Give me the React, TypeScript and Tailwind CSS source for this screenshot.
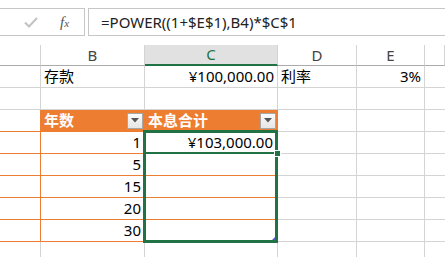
const grid = 'border-[#d4d4d4]';
const orange = 'border-[#ed7d31]';

const cols = [
  { key: 'A', w: 'w-[41px]' },
  { key: 'B', w: 'w-[104px]' },
  { key: 'C', w: 'w-[133px]' },
  { key: 'D', w: 'w-[79px]' },
  { key: 'E', w: 'w-[68px]' },
  { key: 'F', w: 'flex-1' },
];

const Dropdown = () => (
  <div className="w-[16px] h-[16px] border border-[#a6a6a6] bg-gradient-to-b from-[#fafafa] to-[#e6e6e6] flex items-center justify-center">
    <svg width="8" height="5" viewBox="0 0 8 5">
      <path d="M0 0 H8 L4 4.5 Z" fill="#555" />
    </svg>
  </div>
);

const years = ['1', '5', '15', '20', '30'];

const App = () => {
  return (
    <div className="relative w-[445px] h-[257px] overflow-hidden bg-white text-[15px] text-black font-['Noto_Sans','Noto_Sans_CJK_SC',sans-serif]">
      {/* formula bar */}
      <div className="h-[45px] flex items-start pt-[8px]">
        <div className="w-[85px] h-[28px] border border-l-0 border-[#c6c6c6] flex items-center">
          <svg className="ml-[24px]" width="14" height="11" viewBox="0 0 14 11">
            <path d="M1 5.5 L5 9.5 L13 1" fill="none" stroke="#c2c2c2" strokeWidth="2" />
          </svg>
          <span className="ml-[22px] text-[#555] italic font-['Liberation_Serif',serif] text-[15px] leading-none">
            f<span className="text-[11px]">x</span>
          </span>
        </div>
        <div className="ml-[3px] flex-1 h-[28px] border border-r-0 border-[#c6c6c6] flex items-center pl-[12px] text-[15px] text-[#222] whitespace-nowrap">
          =POWER((1+$E$1),B4)*$C$1
        </div>
      </div>

      {/* column headers */}
      <div className="flex h-[21px]">
        {cols.map((c) =>
          c.key === 'C' ? (
            <div key={c.key} className={`${c.w} h-full bg-[#e1e1e1] border-r ${grid} border-b-2 border-b-[#217346] flex items-center justify-center text-[15px] text-[#217346]`}>
              C
            </div>
          ) : (
            <div key={c.key} className={`${c.w} h-full border-r ${grid} border-b border-b-[#ababab] flex items-center justify-center text-[15px] text-[#444]`}>
              {c.key === 'A' || c.key === 'F' ? '' : c.key}
            </div>
          )
        )}
      </div>

      {/* row 1 */}
      <div className="flex h-[22px]">
        <div className={`w-[41px] border-r border-b ${grid}`} />
        <div className={`w-[104px] border-r border-b ${grid} flex items-center pl-[3px]`}>存款</div>
        <div className={`w-[133px] border-r border-b ${grid} flex items-center justify-end pr-[3px]`}>¥100,000.00</div>
        <div className={`w-[79px] border-r border-b ${grid} flex items-center pl-[3px]`}>利率</div>
        <div className={`w-[68px] border-r border-b ${grid} flex items-center justify-end pr-[3px]`}>3%</div>
        <div className={`flex-1 border-b ${grid}`} />
      </div>

      {/* row 2 */}
      <div className="flex h-[22px]">
        <div className={`w-[41px] border-r border-b ${grid}`} />
        <div className={`w-[104px] border-r border-b ${grid}`} />
        <div className={`w-[133px] border-r border-b ${grid}`} />
        <div className={`w-[79px] border-r border-b ${grid}`} />
        <div className={`w-[68px] border-r border-b ${grid}`} />
        <div className={`flex-1 border-b ${grid}`} />
      </div>

      {/* row 3: table header */}
      <div className="flex h-[22px]">
        <div className={`w-[41px] border-r ${orange} border-b ${grid}`} />
        <div className={`w-[104px] bg-[#ed7d31] border-r border-b ${orange} flex items-center justify-between pl-[3px] pr-px font-bold text-white`}>
          <span>年数</span>
          <Dropdown />
        </div>
        <div className={`w-[133px] bg-[#ed7d31] border-r border-b ${orange} flex items-center justify-between pl-[3px] pr-px font-bold text-white`}>
          <span>本息合计</span>
          <Dropdown />
        </div>
        <div className={`w-[79px] border-r border-b ${grid}`} />
        <div className={`w-[68px] border-r border-b ${grid}`} />
        <div className={`flex-1 border-b ${grid}`} />
      </div>

      {/* table rows */}
      {years.map((y, i) => (
        <div key={y} className="flex h-[22px]">
          <div className={`w-[41px] border-r ${orange} border-b ${grid}`} />
          <div className={`w-[104px] border-r border-b ${orange} flex items-center justify-end pr-[3px]`}>{y}</div>
          <div className={`w-[133px] border-r border-b ${orange} flex items-center justify-end pr-[4px]`}>
            {i === 0 ? '¥103,000.00' : ''}
          </div>
          <div className={`w-[79px] border-r border-b ${grid}`} />
          <div className={`w-[68px] border-r border-b ${grid}`} />
          <div className={`flex-1 border-b ${grid}`} />
        </div>
      ))}

      {/* row 9 */}
      <div className="flex h-[22px]">
        <div className={`w-[41px] border-r ${grid}`} />
        <div className={`w-[104px] border-r ${grid}`} />
        <div className={`w-[133px] border-r ${grid}`} />
        <div className={`w-[79px] border-r ${grid}`} />
        <div className={`w-[68px] border-r ${grid}`} />
        <div className="flex-1" />
      </div>

      {/* selection overlay */}
      <div className="absolute left-[143px] top-[130px] w-[135px] h-[113px] border-[3px] border-[#217346]" />
      <div className="absolute left-[144px] top-[152px] w-[131px] h-[2px] bg-[#217346]" />
      <div className="absolute left-[274px] top-[150px] w-[7px] h-[7px] bg-[#217346] border border-white" />
      <div className="absolute left-[272px] top-[237px] w-0 h-0 border-l-[3px] border-l-transparent border-b-[3px] border-b-[#5a5ad0]" />
    </div>
  );
};

export default App;
